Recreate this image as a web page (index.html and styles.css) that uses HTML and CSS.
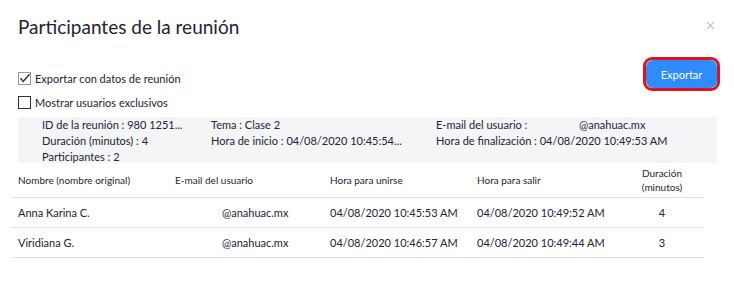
FILE: index.html
```html
<!DOCTYPE html>
<html lang="es">
<head>
    <meta charset="UTF-8">
    <title>Participantes de la reunión</title>
    <link rel="stylesheet" href="styles.css">
</head>
<body>
    <div class="dialog">
        <div class="dialog-header">
            <h1>Participantes de la reunión</h1>
            <svg class="close" width="9" height="9" viewBox="0 0 9 9">
                <path d="M1 1 L8 8 M8 1 L1 8" stroke="#c4c4c4" stroke-width="1.2"/>
            </svg>
        </div>

        <div class="options">
            <div class="checks">
                <label class="check">
                    <svg class="box" width="13" height="13" viewBox="0 0 13 13">
                        <rect x="0.5" y="0.5" width="12" height="12" fill="#fff" stroke="#333" stroke-dasharray="1 1"/>
                        <path d="M2.5 6.3 L5.2 9.5 L11.5 2.2" fill="none" stroke="#333" stroke-width="1.4"/>
                    </svg>
                    Exportar con datos de reunión
                </label>
                <label class="check">
                    <svg class="box" width="13" height="13" viewBox="0 0 13 13">
                        <rect x="0.5" y="0.5" width="12" height="12" fill="#fff" stroke="#333"/>
                    </svg>
                    Mostrar usuarios exclusivos
                </label>
            </div>
            <div class="export-wrap">
                <button class="export-btn">Exportar</button>
            </div>
        </div>

        <div class="info">
            <div>ID de la reunión : 980 1251...</div>
            <div>Tema : Clase 2</div>
            <div><span class="label">E-mail del usuario :</span>@anahuac.mx</div>
            <div>Duración (minutos) : 4</div>
            <div>Hora de inicio : 04/08/2020 10:45:54...</div>
            <div>Hora de finalización : 04/08/2020 10:49:53 AM</div>
            <div>Participantes : 2</div>
        </div>

        <table class="users">
            <thead>
                <tr>
                    <th class="c1">Nombre (nombre original)</th>
                    <th class="c2">E-mail del usuario</th>
                    <th class="c3">Hora para unirse</th>
                    <th class="c4">Hora para salir</th>
                    <th class="c5">Duración<br>(minutos)</th>
                </tr>
            </thead>
            <tbody>
                <tr>
                    <td>Anna Karina C.</td>
                    <td class="mail-cell">@anahuac.mx</td>
                    <td>04/08/2020 10:45:53 AM</td>
                    <td>04/08/2020 10:49:52 AM</td>
                    <td class="num">4</td>
                </tr>
                <tr>
                    <td>Viridiana G.</td>
                    <td class="mail-cell">@anahuac.mx</td>
                    <td>04/08/2020 10:46:57 AM</td>
                    <td>04/08/2020 10:49:44 AM</td>
                    <td class="num">3</td>
                </tr>
            </tbody>
        </table>
    </div>
</body>
</html>
```

FILE: styles.css
```css
* {
    margin: 0;
    padding: 0;
    box-sizing: border-box;
}

body {
    background: #fff;
    color: #232333;
    font-family: Lato, "Liberation Sans", sans-serif;
    width: 734px;
    height: 283px;
    overflow: hidden;
}

.dialog {
    padding: 13px 0 0 0;
}

.dialog-header {
    display: flex;
    justify-content: space-between;
    align-items: flex-start;
    padding: 0 18px;
    height: 44px;
}

.dialog-header h1 {
    font-size: 19px;
    font-weight: 400;
    line-height: 28px;
}

.close {
    margin-top: 8px;
    margin-right: 1px;
}

.options {
    display: flex;
    justify-content: space-between;
    padding: 0 14px 0 18px;
    height: 60px;
}

.checks {
    display: flex;
    flex-direction: column;
    gap: 11px;
    padding-top: 15px;
}

.check {
    display: flex;
    align-items: center;
    gap: 4px;
    font-size: 11px;
    line-height: 13px;
}

.export-wrap {
    border: 3px solid #e8101c;
    border-radius: 9px;
    height: 34px;
}

.export-btn {
    display: block;
    width: 71px;
    height: 28px;
    border: none;
    border-radius: 7px;
    background: #2d8cff;
    color: #fff;
    font-family: Lato, "Liberation Sans", sans-serif;
    font-size: 11px;
}

.info {
    display: grid;
    grid-template-columns: 169px 225px 1fr;
    margin: 0 17px 0 18px;
    padding-left: 24px;
    height: 46px;
    background: #f4f5f7;
    font-size: 11px;
    line-height: 16px;
}

.info .label {
    display: inline-block;
    width: 143px;
}

.users {
    width: 693px;
    margin-left: 11px;
    border-collapse: collapse;
    font-size: 11px;
}

.users th {
    font-weight: 400;
    font-size: 10px;
    line-height: 14px;
    text-align: left;
    height: 34px;
    padding-left: 7px;
    border-bottom: 1px solid #e3e3e3;
}

.users td {
    height: 30px;
    padding-left: 7px;
    border-bottom: 1px solid #e3e3e3;
}

.users .c1 { width: 157px; }
.users .c2 { width: 155px; }
.users .c3 { width: 147px; }
.users .c4 { width: 150px; }

.users .c5,
.users .num {
    text-align: center;
    padding-left: 0;
}

.users .mail-cell {
    padding-left: 54px;
}
```
